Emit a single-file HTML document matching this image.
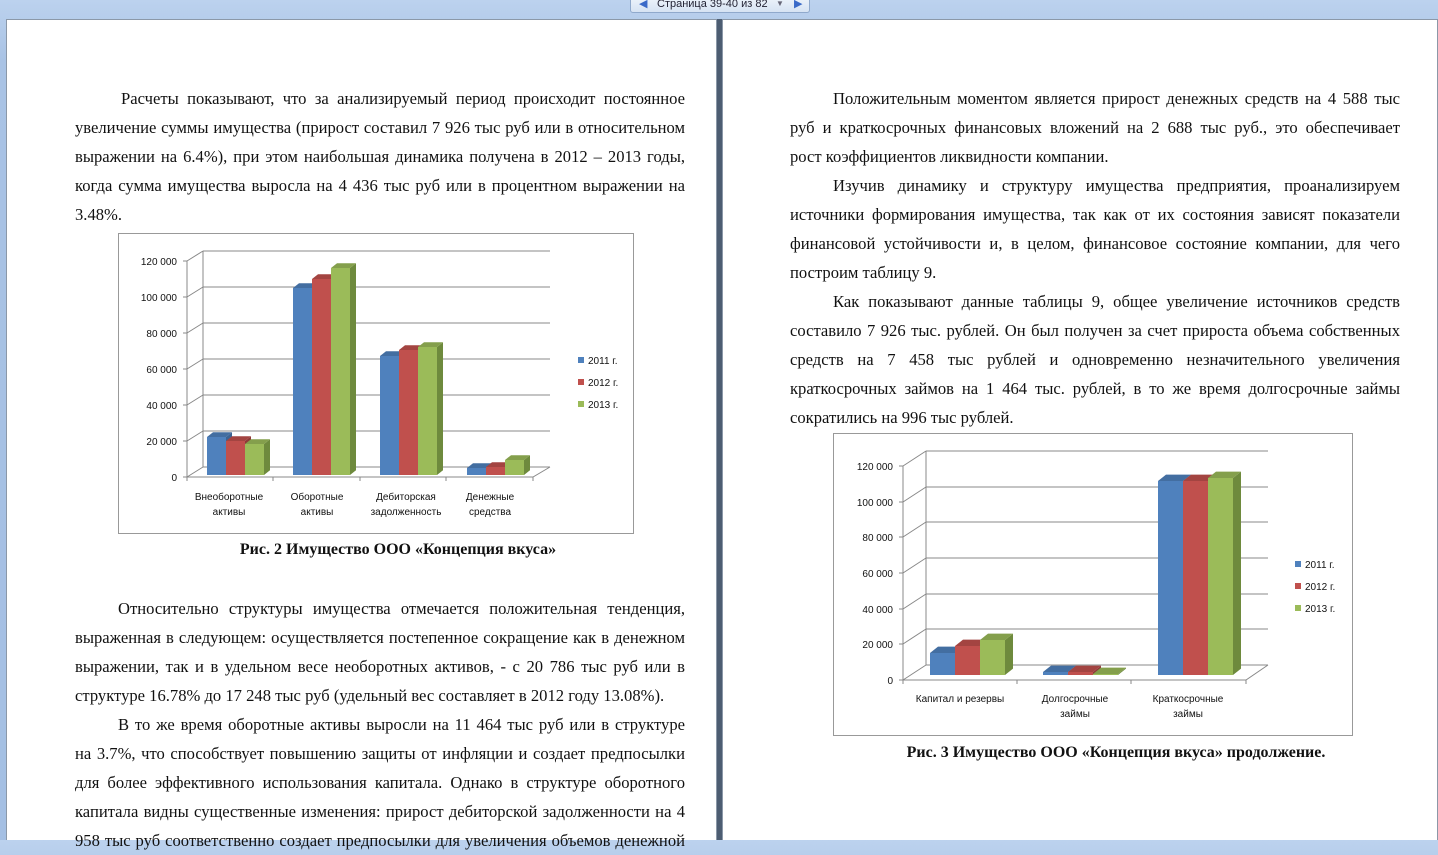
<!DOCTYPE html>
<html><head><meta charset="utf-8">
<style>
html,body{margin:0;padding:0;width:1438px;height:840px;overflow:hidden;background:linear-gradient(#bcd2ee,#a9c3e5 60px,#a4bfe3);font-family:"Liberation Serif",serif;}
.page{position:absolute;top:19px;background:#fff;height:821px;border:1px solid #8b98a8;border-bottom:none;box-sizing:border-box}
#p1{left:6px;width:711px}
#p2{left:722px;width:716px}
.gap{position:absolute;left:717px;top:19px;width:5px;height:821px;background:#4d5d72}
.t{position:absolute;font-size:16.6px;line-height:29px;color:#111;white-space:nowrap}
.l{height:29px;overflow:hidden;text-align:justify;text-align-last:justify;white-space:normal}
.e{height:29px;text-align:left}
.cap{position:absolute;font-weight:bold;font-size:16px;color:#111;text-align:center}
.nav{position:absolute;left:630px;top:-4px;width:178px;height:15px;background:linear-gradient(#eef4fb,#d6e3f3);border:1px solid #8fa9cc;border-radius:3px;font-family:"Liberation Sans",sans-serif;font-size:11px;color:#223;line-height:14px}
svg{position:absolute;left:0;top:0}
svg text{font-family:"Liberation Sans",sans-serif;font-size:10px;fill:#111}
</style></head><body>
<div class="page" id="p1"></div><div class="page" id="p2"></div><div class="gap"></div>
<div class="nav"><span style="position:absolute;left:8px;color:#3a6ac8">◀</span><span style="position:absolute;left:26px;">Страница 39-40 из 82</span><span style="position:absolute;left:145px;font-size:8px;color:#667">▼</span><span style="position:absolute;left:163px;color:#3a6ac8">▶</span></div>

<div class="t" style="left:75px;top:84px;width:610px">
<div class="l" style="padding-left:46px">Расчеты показывают, что за анализируемый период происходит постоянное</div>
<div class="l">увеличение суммы имущества (прирост составил 7 926 тыс руб или в относительном</div>
<div class="l">выражении на 6.4%), при этом наибольшая динамика получена в 2012 – 2013 годы,</div>
<div class="l">когда сумма имущества выросла на 4 436 тыс руб или в процентном выражении на</div>
<div class="e">3.48%.</div>
</div>
<div class="cap" style="left:75px;width:646px;top:541px">Рис. 2 Имущество ООО «Концепция вкуса»</div>
<div class="t" style="left:75px;top:594px;width:610px">
<div class="l" style="padding-left:43px">Относительно структуры имущества отмечается положительная тенденция,</div>
<div class="l">выраженная в следующем: осуществляется постепенное сокращение как в денежном</div>
<div class="l">выражении, так и в удельном весе необоротных активов, - с 20 786 тыс руб или в</div>
<div class="e">структуре 16.78% до 17 248 тыс руб (удельный вес составляет в 2012 году 13.08%).</div>
<div class="l" style="padding-left:43px">В то же время оборотные активы выросли на 11 464 тыс руб или в структуре</div>
<div class="l">на 3.7%, что способствует повышению защиты от инфляции и создает предпосылки</div>
<div class="l">для более эффективного использования капитала. Однако в структуре оборотного</div>
<div class="l">капитала видны существенные изменения: прирост дебиторской задолженности на 4</div>
<div class="l">958 тыс руб соответственно создает предпосылки для увеличения объемов денежной</div>
</div>

<div class="t" style="left:790px;top:84px;width:610px">
<div class="l" style="padding-left:43px">Положительным моментом является прирост денежных средств на 4 588 тыс</div>
<div class="l">руб и краткосрочных финансовых вложений на 2 688 тыс руб., это обеспечивает</div>
<div class="e">рост коэффициентов ликвидности компании.</div>
<div class="l" style="padding-left:43px">Изучив динамику и структуру имущества предприятия, проанализируем</div>
<div class="l">источники формирования имущества, так как от их состояния зависят показатели</div>
<div class="l">финансовой устойчивости и, в целом, финансовое состояние компании, для чего</div>
<div class="e">построим таблицу 9.</div>
<div class="l" style="padding-left:43px">Как показывают данные таблицы 9, общее увеличение источников средств</div>
<div class="l">составило 7 926 тыс. рублей. Он был получен за счет прироста объема собственных</div>
<div class="l">средств на 7 458 тыс рублей и одновременно незначительного увеличения</div>
<div class="l">краткосрочных займов на 1 464 тыс. рублей, в то же время долгосрочные займы</div>
<div class="e">сократились на 996 тыс рублей.</div>
</div>
<div class="cap" style="left:790px;width:652px;top:744px">Рис. 3 Имущество ООО «Концепция вкуса» продолжение.</div>

<svg width="1438" height="840" id="s">
<rect x="118.5" y="233.5" width="515" height="300" fill="#fff" stroke="#999"/>
<g stroke="#888" fill="none" stroke-width="1">
<path d="M203 251V467M187 261V477H533L550 467M187 477v4M273 477v4M360 477v4M446 477v4M533 477v4"/>
<path d="M203 467H550M203 431H550M203 395H550M203 359H550M203 323H550M203 287H550M203 251H550"/>
<path d="M187 477L203 467M187 441L203 431M187 405L203 395M187 369L203 359M187 333L203 323M187 297L203 287M187 261L203 251"/>
<path d="M183 477h4M183 441h4M183 405h4M183 369h4M183 333h4M183 297h4M183 261h4"/>
</g>
<g text-anchor="end"><text x="177" y="265">120 000</text><text x="177" y="301">100 000</text><text x="177" y="337">80 000</text><text x="177" y="373">60 000</text><text x="177" y="409">40 000</text><text x="177" y="445">20 000</text><text x="177" y="481">0</text></g>
<g text-anchor="middle"><text x="229" y="500">Внеоборотные</text><text x="229" y="515">активы</text><text x="317" y="500">Оборотные</text><text x="317" y="515">активы</text><text x="406" y="500">Дебиторская</text><text x="406" y="515">задолженность</text><text x="490" y="500">Денежные</text><text x="490" y="515">средства</text></g>
<rect x="578" y="357" width="6" height="6" fill="#4f81bd"/><text x="588" y="364">2011 г.</text>
<rect x="578" y="379" width="6" height="6" fill="#c0504d"/><text x="588" y="386">2012 г.</text>
<rect x="578" y="401" width="6" height="6" fill="#9bbb59"/><text x="588" y="408">2013 г.</text>

<rect x="833.5" y="433.5" width="519" height="302" fill="#fff" stroke="#999"/>
<g stroke="#888" fill="none">
<path d="M926 451V665M903 466V680H1246L1268 665M903 680v4M1017 680v4M1131 680v4M1246 680v4"/>
<path d="M926 665H1268M926 629H1268M926 594H1268M926 558H1268M926 522H1268M926 487H1268M926 451H1268"/>
<path d="M903 680L926 665M903 644L926 629M903 609L926 594M903 573L926 558M903 537L926 522M903 502L926 487M903 466L926 451"/>
<path d="M899 680h4M899 644h4M899 609h4M899 573h4M899 537h4M899 502h4M899 466h4"/>
</g>
<g text-anchor="end"><text x="893" y="470">120 000</text><text x="893" y="506">100 000</text><text x="893" y="541">80 000</text><text x="893" y="577">60 000</text><text x="893" y="613">40 000</text><text x="893" y="648">20 000</text><text x="893" y="684">0</text></g>
<g text-anchor="middle"><text x="960" y="702">Капитал и резервы</text><text x="1075" y="702">Долгосрочные</text><text x="1075" y="717">займы</text><text x="1188" y="702">Краткосрочные</text><text x="1188" y="717">займы</text></g>
<rect x="1295" y="561" width="6" height="6" fill="#4f81bd"/><text x="1305" y="568">2011 г.</text>
<rect x="1295" y="583" width="6" height="6" fill="#c0504d"/><text x="1305" y="590">2012 г.</text>
<rect x="1295" y="605" width="6" height="6" fill="#9bbb59"/><text x="1305" y="612">2013 г.</text>
<g id="bars"></g>
</svg>
<script>
var C=[["#4f81bd","#3b6494","#6d98cf"],["#c0504d","#8e3a38","#d0716e"],["#9bbb59","#6e8a3d","#b3cf77"]];
var h='';
function b(x,w,t,base,d,i){var c=C[i],dy=d*0.8;
h+='<rect x="'+x+'" y="'+t+'" width="'+w+'" height="'+(base-t)+'" fill="'+c[0]+'"/>';
h+='<polygon points="'+(x+w)+','+t+' '+(x+w+d)+','+(t-dy)+' '+(x+w+d)+','+(base-dy)+' '+(x+w)+','+base+'" fill="'+c[1]+'"/>';
h+='<polygon points="'+x+','+t+' '+(x+d)+','+(t-dy)+' '+(x+w+d)+','+(t-dy)+' '+(x+w)+','+t+'" fill="'+c[0]+'" style="filter:brightness(0.85)"/>';}
var g1=[[207,[437,441,444]],[293,[288,279,268]],[380,[356,350,347]],[467,[468,467,460]]];
g1.forEach(function(g){for(var i=0;i<3;i++)b(g[0]+i*19,19,g[1][i],475,6,i);});
var g2=[[930,[653,646,640]],[1043,[672,672,674]],[1158,[481,481,478]]];
g2.forEach(function(g){for(var i=0;i<3;i++)b(g[0]+i*25,25,g[1][i],675,8,i);});
document.getElementById('bars').innerHTML=h;
</script>
</body></html>
